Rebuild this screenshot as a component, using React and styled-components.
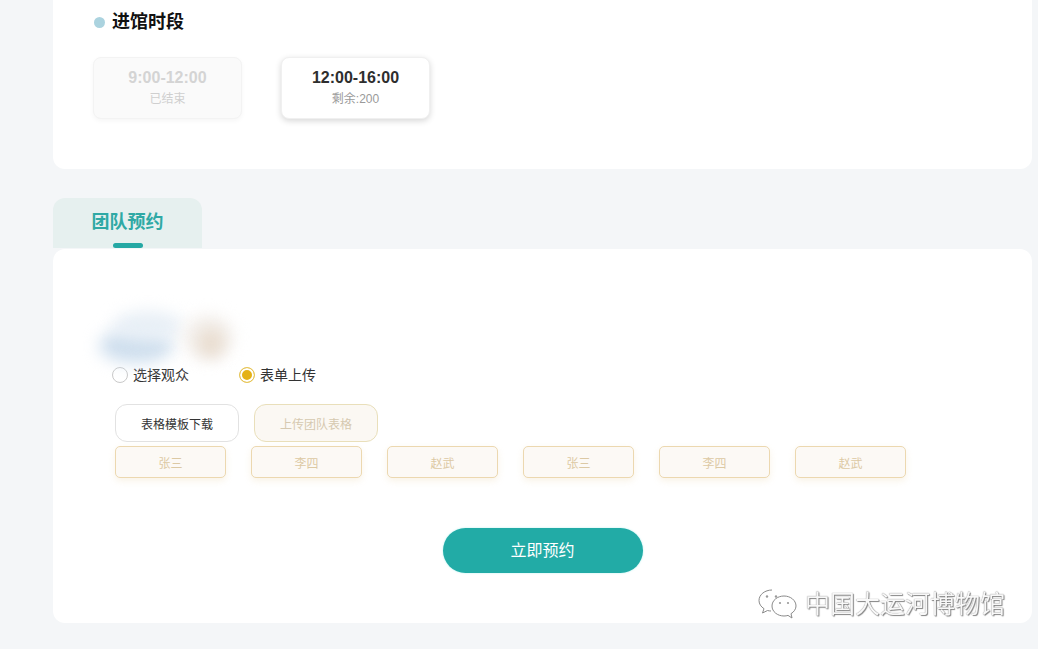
import React from "react";
import styled, { createGlobalStyle } from "styled-components";

const GlobalStyle = createGlobalStyle`
  html, body {
    margin: 0;
    padding: 0;
    background: #f4f6f8;
    overflow: hidden;
  }
  body {
    font-family: "Liberation Sans", "Noto Sans CJK SC", sans-serif;
  }
`;

const Page = styled.div`
  position: relative;
  width: 1038px;
  height: 649px;
  padding: 0 6px 0 53px;
  box-sizing: border-box;
  overflow: hidden;
  filter: blur(0.35px);
`;

const TimeCard = styled.section`
  height: 169px;
  box-sizing: border-box;
  padding: 11px 0 0 40px;
  background: #fff;
  border-radius: 0 0 12px 12px;
`;

const TitleRow = styled.div`
  display: flex;
  align-items: center;
  gap: 7px;
  height: 23px;
  margin-bottom: 23px;
`;

const Dot = styled.span`
  width: 11px;
  height: 11px;
  margin-left: 1px;
  border-radius: 50%;
  background: #abd3df;
`;

const Title = styled.h2`
  margin: -6px 0 0;
  font-size: 18px;
  font-weight: 700;
  color: #111;
`;

const Slots = styled.div`
  display: flex;
  gap: 39px;
`;

const Slot = styled.div`
  width: 149px;
  height: 62px;
  box-sizing: border-box;
  display: flex;
  flex-direction: column;
  align-items: center;
  padding-top: 10px;
  border-radius: 8px;
  background: ${(p) => (p.$ended ? "#fafafa" : "#fff")};
  border: 1px solid ${(p) => (p.$ended ? "#f3f3f3" : "#f0f0f0")};
  box-shadow: ${(p) =>
    p.$ended ? "0 2px 5px rgba(0,0,0,0.04)" : "0 2px 6px rgba(0,0,0,0.16)"};
`;

const SlotTime = styled.div`
  font-size: 16px;
  line-height: 20px;
  font-weight: 700;
  color: ${(p) => (p.$ended ? "#d4d4d4" : "#2e2e2e")};
`;

const SlotNote = styled.div`
  margin-top: 2px;
  font-size: 12px;
  line-height: 18px;
  color: ${(p) => (p.$ended ? "#cfcfcf" : "#9a9a9a")};
`;

const Tab = styled.div`
  position: relative;
  width: 149px;
  height: 50px;
  margin-top: 29px;
  box-sizing: border-box;
  padding-top: 11px;
  text-align: center;
  font-size: 18px;
  line-height: 26px;
  font-weight: 700;
  color: #2fa9a5;
  background: #e6f0ef;
  border-radius: 12px 12px 0 0;

  &::after {
    content: "";
    position: absolute;
    left: 60px;
    bottom: 0;
    width: 30px;
    height: 5px;
    border-radius: 3px;
    background: #25a8a4;
  }
`;

const TeamCard = styled.section`
  position: relative;
  height: 374px;
  margin-top: 1px;
  box-sizing: border-box;
  padding: 115px 0 0 59px;
  background: #fff;
  border-radius: 12px;
`;

const Smudge = styled.div`
  position: absolute;
  border-radius: 50%;
  filter: blur(8px);
  left: ${(p) => p.$x}px;
  top: ${(p) => p.$y}px;
  width: ${(p) => p.$w}px;
  height: ${(p) => p.$h}px;
  background: ${(p) => p.$c};
`;

const RadioRow = styled.div`
  display: flex;
  height: 20px;
  margin-bottom: 20px;
`;

const RadioItem = styled.label`
  display: flex;
  align-items: center;
  gap: 5px;
  width: 127px;
  font-size: 14px;
  color: #333;
`;

const RadioMark = styled.span`
  width: 16px;
  height: 16px;
  margin-top: 2px;
  box-sizing: border-box;
  border-radius: 50%;
  border: 1px solid ${(p) => (p.$on ? "#e6c65a" : "#c9c9c9")};
  background: ${(p) => (p.$on ? "#e4b116" : "#fff")};
  box-shadow: ${(p) => (p.$on ? "inset 0 0 0 2px #fff" : "none")};
`;

const Actions = styled.div`
  display: flex;
  gap: 15px;
  margin-left: 3px;
  margin-bottom: 4px;
`;

const ActionButton = styled.button`
  width: 124px;
  height: 38px;
  padding: 0;
  box-sizing: border-box;
  font: inherit;
  font-size: 12px;
  border-radius: 12px;
  color: ${(p) => (p.$muted ? "#d6c9b0" : "#333")};
  background: ${(p) => (p.$muted ? "#fbf8f3" : "#fff")};
  border: 1px solid ${(p) => (p.$muted ? "#e9dfba" : "#e2e2e2")};
`;

const Names = styled.div`
  display: flex;
  gap: 25px;
  margin-left: 3px;
  margin-bottom: 50px;
`;

const NameChip = styled.div`
  width: 111px;
  height: 32px;
  box-sizing: border-box;
  display: flex;
  align-items: center;
  justify-content: center;
  font-size: 12px;
  color: #dcc9a4;
  background: #fcf9f5;
  border: 1px solid #ecd8b0;
  border-radius: 5px;
  box-shadow: 0 3px 7px rgba(225, 195, 135, 0.2);
`;

const SubmitRow = styled.div`
  display: flex;
  justify-content: center;
  margin-left: -59px;
`;

const Submit = styled.button`
  width: 200px;
  height: 45px;
  padding: 0 0 3px;
  border: 0;
  border-radius: 23px;
  background: #22aba6;
  color: #fff;
  font-family: "Noto Sans CJK SC", sans-serif;
  font-size: 16px;
  box-shadow: 0 0 2px rgba(120, 230, 225, 0.6);
`;

const Watermark = styled.div`
  position: absolute;
  left: 757px;
  top: 587px;
  display: flex;
  align-items: center;
  gap: 8px;
  font-size: 25px;
  line-height: 34px;
  color: #f8f8f8;
  text-shadow: 0 0 1px #666, 1px 1px 1px #888;
`;

const slots = [
  { time: "9:00-12:00", note: "已结束", ended: true },
  { time: "12:00-16:00", note: "剩余:200", ended: false },
];

const people = ["张三", "李四", "赵武", "张三", "李四", "赵武"];

const smudges = [
  { x: 46, y: 80, w: 74, h: 34, c: "#cfdfee" },
  { x: 60, y: 62, w: 70, h: 30, c: "#e8eff6" },
  { x: 130, y: 66, w: 50, h: 44, c: "#f3efeb" },
  { x: 146, y: 80, w: 24, h: 28, c: "#e8dbcd" },
];

const WechatIcon = () => (
  <svg width="40" height="32" viewBox="0 0 40 32" fill="#fff" stroke="#8a8a8a" strokeWidth="1">
    <path d="M15 2C8 2 2 6.500 2 12.500c0 3.500 2 6.200 5 8.200L5.500 25l5-2.500c1 .3 2.500.5 3.500.5" />
    <path d="M27 8c-6.500 0-12 4.300-12 10s5.500 10 12 10c1.500 0 2.800-.2 4-.6L35 30l-1-4.300c3-1.800 5-4.700 5-7.700 0-5.700-5.500-10-12-10z" />
    <circle cx="10" cy="8.500" r="1.200" fill="#999" stroke="none" />
    <circle cx="19" cy="8.500" r="1.200" fill="#999" stroke="none" />
    <circle cx="23" cy="15" r="1.100" fill="#999" stroke="none" />
    <circle cx="31" cy="15" r="1.100" fill="#999" stroke="none" />
  </svg>
);

export default function App() {
  return (
    <>
      <GlobalStyle />
      <Page>
        <TimeCard>
          <TitleRow>
            <Dot />
            <Title>进馆时段</Title>
          </TitleRow>
          <Slots>
            {slots.map((s) => (
              <Slot key={s.time} $ended={s.ended}>
                <SlotTime $ended={s.ended}>{s.time}</SlotTime>
                <SlotNote $ended={s.ended}>{s.note}</SlotNote>
              </Slot>
            ))}
          </Slots>
        </TimeCard>

        <Tab>团队预约</Tab>
        <TeamCard>
          {smudges.map((s) => (
            <Smudge key={s.x} $x={s.x} $y={s.y} $w={s.w} $h={s.h} $c={s.c} />
          ))}
          <RadioRow>
            <RadioItem>
              <RadioMark />
              选择观众
            </RadioItem>
            <RadioItem>
              <RadioMark $on />
              表单上传
            </RadioItem>
          </RadioRow>
          <Actions>
            <ActionButton>表格模板下载</ActionButton>
            <ActionButton $muted>上传团队表格</ActionButton>
          </Actions>
          <Names>
            {people.map((name, i) => (
              <NameChip key={i}>{name}</NameChip>
            ))}
          </Names>
          <SubmitRow>
            <Submit>立即预约</Submit>
          </SubmitRow>
        </TeamCard>

        <Watermark>
          <WechatIcon />
          中国大运河博物馆
        </Watermark>
      </Page>
    </>
  );
}
